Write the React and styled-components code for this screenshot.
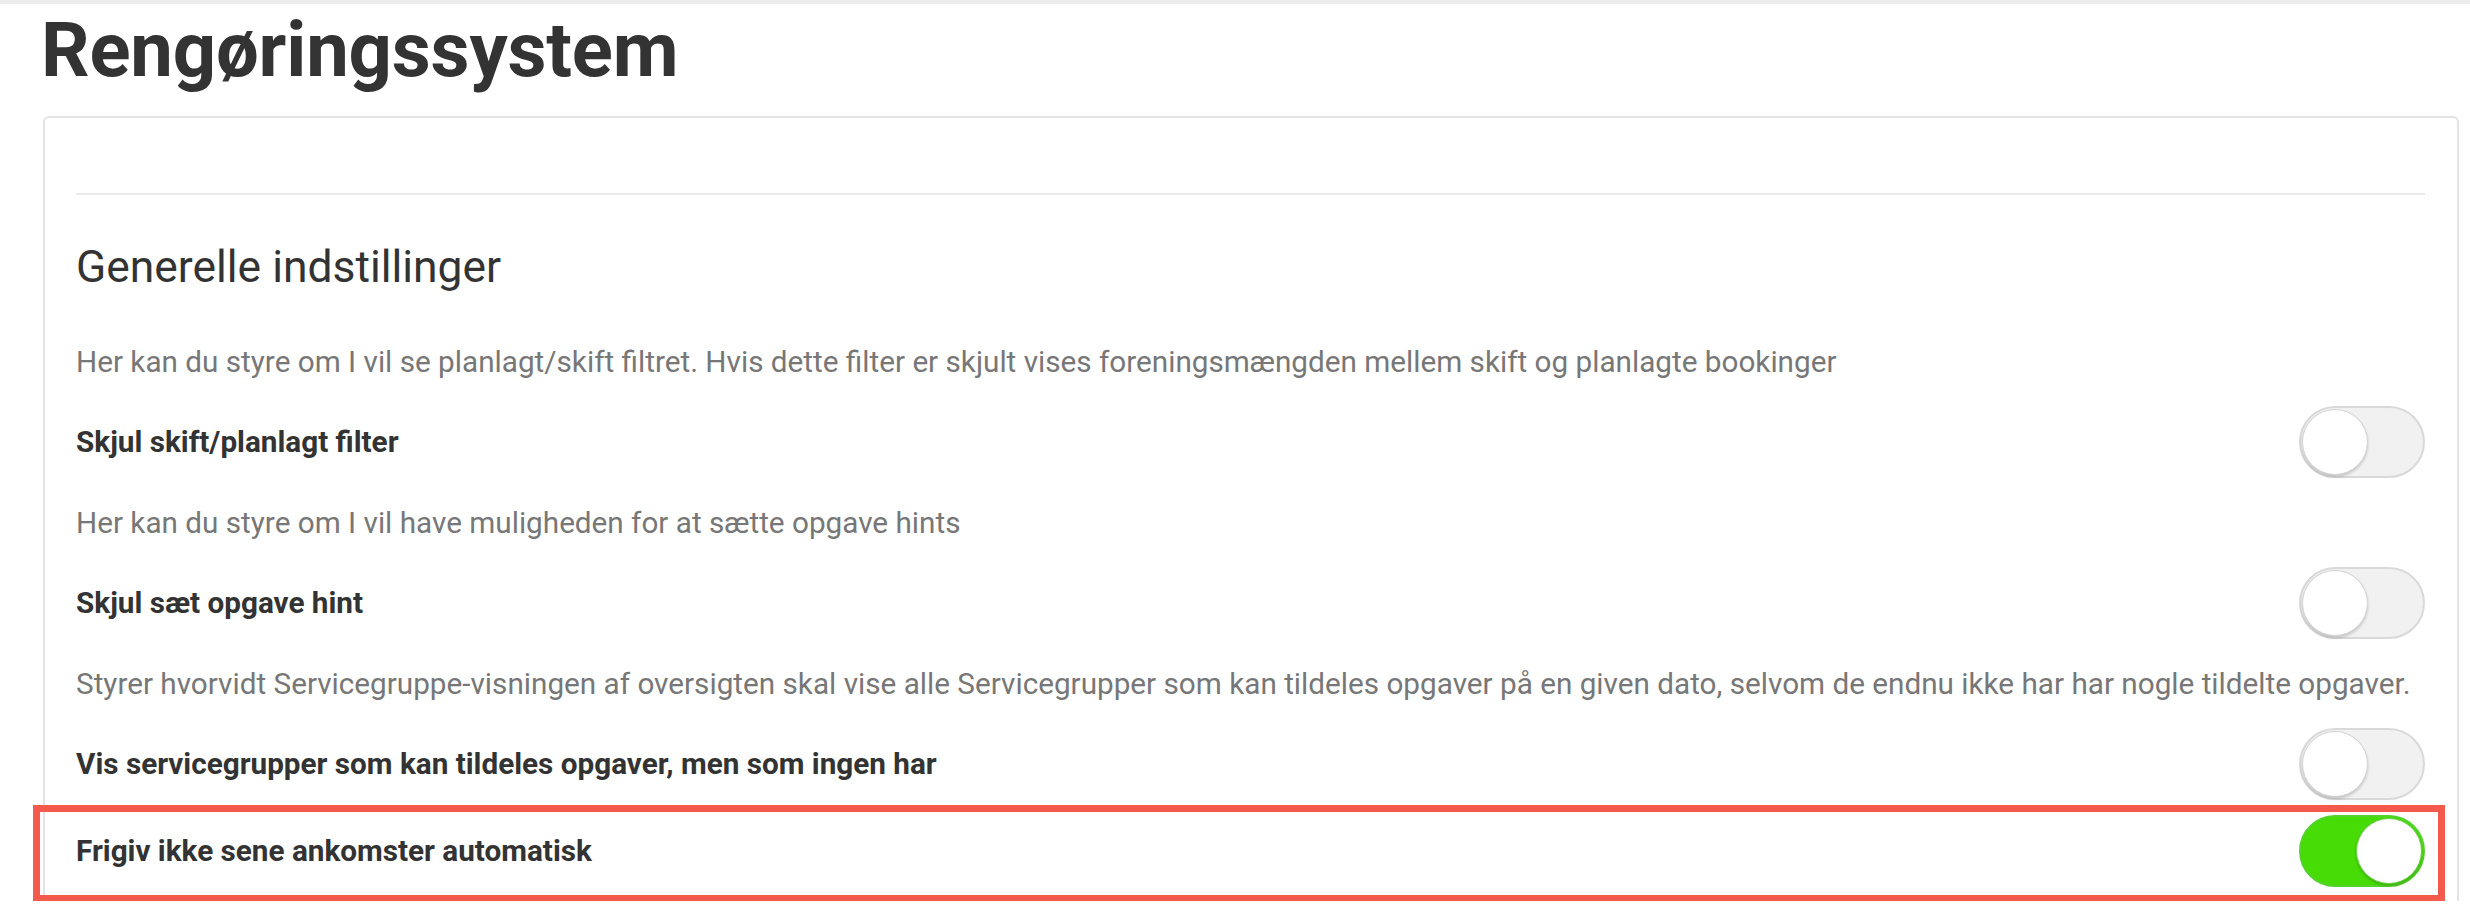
import React from "react";
import styled, { createGlobalStyle, css } from "styled-components";

const GlobalStyle = createGlobalStyle`
  html, body {
    margin: 0;
    padding: 0;
    background: #ffffff;
  }
  body {
    border-top: 4px solid #ececec;
    font-family: Roboto, "Noto Sans", "Liberation Sans", sans-serif;
    color: #333333;
    -webkit-font-smoothing: antialiased;
  }
`;

const Page = styled.main`
  padding: 0 11px 0 43px;
`;

const Title = styled.h1`
  margin: 1px 0 21px -2px;
  font-size: 76px;
  line-height: 90px;
  font-weight: 700;
  color: #333333;
  letter-spacing: -0.2px;
`;

const Card = styled.section`
  border: 2px solid #e4e4e4;
  border-bottom: none;
  border-radius: 6px 6px 0 0;
  padding: 75px 32px 14px 31px;
`;

const Divider = styled.hr`
  margin: 0;
  border: none;
  border-top: 2px solid #ebebeb;
`;

const SectionTitle = styled.h2`
  margin: 47px 0 52px;
  font-size: 44.4px;
  line-height: 50px;
  font-weight: 400;
  color: #333333;
`;

const Setting = styled.div`
  display: flex;
  flex-direction: column;
  margin-bottom: ${(p) => p.$gap}px;
`;

const Description = styled.p`
  margin: 0 0 26px;
  font-size: 29.7px;
  line-height: 36px;
  color: #777777;
  white-space: nowrap;
`;

const Row = styled.div`
  position: relative;
  display: flex;
  align-items: center;
  justify-content: space-between;
  height: 72px;
`;

const Label = styled.span`
  font-size: 29.7px;
  line-height: 36px;
  font-weight: 700;
  color: #333333;
`;

const Highlight = styled.div`
  position: absolute;
  left: -43px;
  right: -20px;
  top: -10px;
  bottom: -15px;
  border: 7px solid #f45a4b;
  pointer-events: none;
`;

const Track = styled.button`
  position: relative;
  flex: none;
  width: 126px;
  height: 72px;
  padding: 0;
  border-radius: 36px;
  cursor: pointer;
  ${(p) =>
    p.$on
      ? css`
          background: #48dc06;
          border: 2px solid #52d22a;
        `
      : css`
          background: #f1f1f1;
          border: 2px solid #d9d9d9;
        `}
`;

const Knob = styled.span`
  position: absolute;
  top: 1px;
  ${(p) => (p.$on ? "right: 1px;" : "left: 1px;")}
  width: 66px;
  height: 66px;
  border-radius: 50%;
  background: #ffffff;
  box-sizing: border-box;
  border: 1px solid ${(p) => (p.$on ? "#6bcf4c" : "#d4d4d4")};
  box-shadow: 0 2px 3px rgba(0, 0, 0, 0.18);
`;

const Toggle = ({ on }) => (
  <Track type="button" $on={on} aria-pressed={on}>
    <Knob $on={on} />
  </Track>
);

const settings = [
  {
    desc: "Her kan du styre om I vil se planlagt/skift filtret. Hvis dette filter er skjult vises foreningsmængden mellem skift og planlagte bookinger",
    label: "Skjul skift/planlagt filter",
    on: false,
    gap: 27,
  },
  {
    desc: "Her kan du styre om I vil have muligheden for at sætte opgave hints",
    label: "Skjul sæt opgave hint",
    on: false,
    gap: 27,
  },
  {
    desc: "Styrer hvorvidt Servicegruppe-visningen af oversigten skal vise alle Servicegrupper som kan tildeles opgaver på en given dato, selvom de endnu ikke har har nogle tildelte opgaver.",
    label: "Vis servicegrupper som kan tildeles opgaver, men som ingen har",
    on: false,
    gap: 15,
  },
  {
    label: "Frigiv ikke sene ankomster automatisk",
    on: true,
    highlight: true,
    gap: 0,
  },
];

export default function App() {
  return (
    <>
      <GlobalStyle />
      <Page>
        <Title>Rengøringssystem</Title>
        <Card>
          <Divider />
          <SectionTitle>Generelle indstillinger</SectionTitle>
          {settings.map((s) => (
            <Setting key={s.label} $gap={s.gap}>
              {s.desc && <Description>{s.desc}</Description>}
              <Row>
                {s.highlight && <Highlight />}
                <Label>{s.label}</Label>
                <Toggle on={s.on} />
              </Row>
            </Setting>
          ))}
        </Card>
      </Page>
    </>
  );
}
